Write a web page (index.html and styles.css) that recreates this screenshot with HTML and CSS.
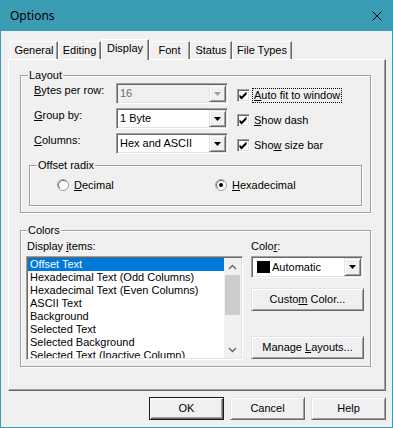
FILE: index.html
```html
<!DOCTYPE html>
<html lang="en">
<head>
	<meta charset="UTF-8">
	<title>Options</title>
	<link rel="stylesheet" href="styles.css">
</head>
<body>
	<div class="window">
		<div class="titlebar">
			<span class="title">Options</span>
			<svg class="close" width="10" height="10" viewBox="0 0 10 10"><path d="M0.5 0.5L9.5 9.5M9.5 0.5L0.5 9.5" stroke="#000" stroke-width="1"/></svg>
		</div>
		<div class="client">
			<div class="tabs">
				<div class="tab t-general">General</div>
				<div class="tab t-editing">Editing</div>
				<div class="tab t-display active">Display</div>
				<div class="tab t-font">Font</div>
				<div class="tab t-status">Status</div>
				<div class="tab t-types">File Types</div>
			</div>
			<div class="panel">
				<fieldset class="group layout">
					<legend>Layout</legend>
					<div class="layout-grid">
						<label class="field-label"><u>B</u>ytes per row:</label>
						<div class="combo disabled">
							<span class="combo-value">16</span>
							<span class="combo-btn"><svg width="7" height="4" viewBox="0 0 7 4"><path d="M0 0h7L3.5 4z"/></svg></span>
						</div>
						<div class="check">
							<span class="checkbox"><svg width="11" height="11" viewBox="0 0 11 11"><path d="M1.5 4.5L3.5 6.5L8.5 1.5V4.5L3.5 9.5L1.5 7.5Z"/></svg></span>
							<span class="check-text focus"><u>A</u>uto fit to window</span>
						</div>

						<label class="field-label"><u>G</u>roup by:</label>
						<div class="combo">
							<span class="combo-value">1 Byte</span>
							<span class="combo-btn"><svg width="7" height="4" viewBox="0 0 7 4"><path d="M0 0h7L3.5 4z"/></svg></span>
						</div>
						<div class="check">
							<span class="checkbox"><svg width="11" height="11" viewBox="0 0 11 11"><path d="M1.5 4.5L3.5 6.5L8.5 1.5V4.5L3.5 9.5L1.5 7.5Z"/></svg></span>
							<span class="check-text"><u>S</u>how dash</span>
						</div>

						<label class="field-label"><u>C</u>olumns:</label>
						<div class="combo">
							<span class="combo-value">Hex and ASCII</span>
							<span class="combo-btn"><svg width="7" height="4" viewBox="0 0 7 4"><path d="M0 0h7L3.5 4z"/></svg></span>
						</div>
						<div class="check">
							<span class="checkbox"><svg width="11" height="11" viewBox="0 0 11 11"><path d="M1.5 4.5L3.5 6.5L8.5 1.5V4.5L3.5 9.5L1.5 7.5Z"/></svg></span>
							<span class="check-text">Sho<u>w</u> size bar</span>
						</div>
					</div>

					<fieldset class="group radix">
						<legend>Offset radix</legend>
						<div class="radios">
							<div class="radio-item r-dec">
								<svg class="radio" width="12" height="12" viewBox="0 0 12 12"><circle cx="6" cy="6" r="5.5" fill="#fff" stroke="#a0a0a0"/><path d="M2.8 9.2A4.5 4.5 0 0 1 9.2 2.8" fill="none" stroke="#696969"/></svg>
								<span><u>D</u>ecimal</span>
							</div>
							<div class="radio-item">
								<svg class="radio" width="12" height="12" viewBox="0 0 12 12"><circle cx="6" cy="6" r="5.5" fill="#fff" stroke="#a0a0a0"/><path d="M2.8 9.2A4.5 4.5 0 0 1 9.2 2.8" fill="none" stroke="#696969"/><circle cx="6" cy="6" r="2" fill="#000"/></svg>
								<span><u>H</u>exadecimal</span>
							</div>
						</div>
					</fieldset>
				</fieldset>

				<fieldset class="group colors">
					<legend>Colors</legend>
					<div class="colors-grid">
						<label class="items-label">Display <u>i</u>tems:</label>
						<label>Colo<u>r</u>:</label>
						<div class="listbox">
							<div class="items">
								<div class="item sel">Offset Text</div>
								<div class="item">Hexadecimal Text (Odd Columns)</div>
								<div class="item">Hexadecimal Text (Even Columns)</div>
								<div class="item">ASCII Text</div>
								<div class="item">Background</div>
								<div class="item">Selected Text</div>
								<div class="item">Selected Background</div>
								<div class="item">Selected Text (Inactive Column)</div>
							</div>
							<div class="scrollbar">
								<div class="sb-btn"><svg width="9" height="6" viewBox="0 0 9 6"><path d="M1 5L4.5 1.5L8 5" fill="none" stroke="#606060" stroke-width="1.3"/></svg></div>
								<div class="sb-thumb"></div>
								<div class="sb-track"></div>
								<div class="sb-btn"><svg width="9" height="6" viewBox="0 0 9 6"><path d="M1 1L4.5 4.5L8 1" fill="none" stroke="#606060" stroke-width="1.3"/></svg></div>
							</div>
						</div>
						<div class="color-side">
							<div class="combo color-combo">
								<span class="combo-value"><i class="swatch"></i>Automatic</span>
								<span class="combo-btn"><svg width="7" height="4" viewBox="0 0 7 4"><path d="M0 0h7L3.5 4z"/></svg></span>
							</div>
							<button class="btn side-btn custom">Custo<u>m</u> Color...</button>
							<button class="btn side-btn manage">Manage <u>L</u>ayouts...</button>
						</div>
					</div>
				</fieldset>
			</div>
			<div class="buttons">
				<button class="btn default">OK</button>
				<button class="btn">Cancel</button>
				<button class="btn">Help</button>
			</div>
		</div>
	</div>
</body>
</html>
```

FILE: styles.css
```css
body{
	margin: 0;
	background: #fff;
	font: 11px/13px "Liberation Sans", Arial, sans-serif;
	color: #000;
}
.window{
	width: 393px;
	height: 428px;
	box-sizing: border-box;
	border: 1px solid #3a9db4;
	border-top: none;
	background: #f0f0f0;
}
.titlebar{
	height: 31px;
	margin: 0 -1px;
	padding: 0 11px 0 10px;
	background: #3a9db4;
	display: flex;
	align-items: center;
	justify-content: space-between;
}
.title{
	font: 12px/16px "Noto Sans", "Open Sans", sans-serif;
}
.client{
	padding: 8px 6px 0 7px;
}

/* tabs */
.tabs{
	display: flex;
	align-items: flex-end;
	height: 20px;
	padding-left: 2px;
}
.tab{
	box-sizing: border-box;
	height: 18px;
	padding-top: 2px;
	border: 1px solid;
	border-color: #fff #696969 transparent #fff;
	border-bottom: none;
	box-shadow: inset -1px 0 #a0a0a0;
	text-align: center;
	white-space: nowrap;
}
.tab.active{
	height: 21px;
	margin-bottom: -1px;
	background: #f0f0f0;
	position: relative;
	z-index: 1;
}
.t-general{ width: 48px; }
.t-editing{ width: 43px; }
.t-display{ width: 48px; }
.t-font{ width: 41px; }
.t-status{ width: 42px; }
.t-types{ width: 60px; }

.panel{
	box-sizing: border-box;
	height: 332px;
	border: 1px solid;
	border-color: #fff #696969 #696969 #fff;
	box-shadow: inset -1px -1px #a0a0a0;
	padding: 9px 0 0 11px;
}

/* group boxes */
.group{
	margin: 0;
	padding: 0;
	min-width: 0;
	box-sizing: border-box;
	border: 1px solid #a0a0a0;
	box-shadow: inset 1px 1px #fff, 1px 1px #fff;
}
.group legend{
	margin-left: 7px;
	padding: 0 1px;
	line-height: 13px;
	background: #f0f0f0;
}
.layout{
	width: 351px;
	padding: 1px 0 6px 0;
}
.layout-grid{
	display: grid;
	grid-template-columns: 82px 112px 1fr;
	grid-auto-rows: 21px;
	row-gap: 4px;
	margin-left: 13px;
}
.field-label{
	padding-top: 1px;
}

/* combo boxes */
.combo{
	box-sizing: border-box;
	height: 21px;
	display: flex;
	padding: 1px;
	background: #fff;
	border: 1px solid;
	border-color: #a0a0a0 #fff #fff #a0a0a0;
	box-shadow: inset 1px 1px #696969, inset -1px -1px #e3e3e3;
}
.combo-value{
	flex: 1;
	padding-left: 2px;
	line-height: 17px;
	white-space: nowrap;
	overflow: hidden;
}
.combo-btn{
	width: 17px;
	box-sizing: border-box;
	border: 1px solid;
	border-color: #e3e3e3 #696969 #696969 #e3e3e3;
	box-shadow: inset 1px 1px #fff, inset -1px -1px #a0a0a0;
	background: #f0f0f0;
	display: flex;
	align-items: center;
	justify-content: center;
}
.combo-btn svg{
	fill: #000;
}
.combo.disabled{
	background: #f0f0f0;
	color: #6d6d6d;
}
.combo.disabled .combo-btn svg{
	fill: #a0a0a0;
}

/* check boxes */
.check{
	display: flex;
	align-items: flex-start;
	gap: 4px;
	padding: 6px 0 0 9px;
	white-space: nowrap;
}
.checkbox{
	width: 13px;
	height: 13px;
	box-sizing: border-box;
	border: 1px solid;
	border-color: #a0a0a0 #fff #fff #a0a0a0;
	box-shadow: inset 1px 1px #696969, inset -1px -1px #e3e3e3;
	background: #fff;
	display: flex;
}
.checkbox svg{
	fill: #000;
}
.focus{
	outline: 1px dotted #000;
	padding: 0 1px;
	margin-left: -1px;
}

/* radio group */
.radix{
	width: 333px;
	height: 47px;
	margin: 5px 0 0 8px;
	padding-top: 7px;
}
.radios{
	display: flex;
	padding-left: 27px;
}
.radio-item{
	display: flex;
	align-items: flex-start;
	gap: 5px;
}
.r-dec{
	width: 158px;
}

/* colors */
.colors{
	width: 351px;
	height: 143px;
	margin-top: 11px;
	padding-top: 3px;
}
.colors legend{
	margin-left: 6px;
}
.colors-grid{
	display: grid;
	grid-template-columns: 217px 113px;
	column-gap: 8px;
	row-gap: 3px;
	margin-left: 5px;
}
.items-label{
	padding-left: 1px;
}
.listbox{
	box-sizing: border-box;
	height: 104px;
	display: flex;
	padding: 1px;
	background: #fff;
	border: 1px solid;
	border-color: #a0a0a0 #fff #fff #a0a0a0;
	box-shadow: inset 1px 1px #696969, inset -1px -1px #e3e3e3;
}
.items{
	flex: 1;
	overflow: hidden;
}
.item{
	padding-left: 2px;
	white-space: nowrap;
}
.item.sel{
	background: #0078d7;
	color: #fff;
}
.scrollbar{
	width: 17px;
	display: flex;
	flex-direction: column;
	background: #f0f0f0;
}
.sb-btn{
	height: 17px;
	display: flex;
	align-items: center;
	justify-content: center;
}
.sb-thumb{
	height: 40px;
	margin: 0 1px;
	background: #cdcdcd;
}
.sb-track{
	flex: 1;
}
.color-side{
	display: flex;
	flex-direction: column;
	align-items: flex-start;
}
.color-combo{
	width: 112px;
	height: 22px;
}
.color-combo .combo-value{
	display: flex;
	align-items: center;
	padding-left: 4px;
	line-height: 18px;
}
.swatch{
	width: 13px;
	height: 12px;
	margin-right: 2px;
	background: #000;
}

/* buttons */
.btn{
	box-sizing: border-box;
	width: 75px;
	height: 23px;
	padding: 0;
	font: inherit;
	color: #000;
	background: #f0f0f0;
	border: 1px solid;
	border-color: #e3e3e3 #696969 #696969 #e3e3e3;
	box-shadow: inset 1px 1px #fff, inset -1px -1px #a0a0a0;
	white-space: nowrap;
}
.btn.default{
	border-color: #1a1a1a;
	box-shadow: inset 1px 1px #fff, inset -1px -1px #696969, inset -2px -2px #a0a0a0;
}
.side-btn{
	width: 113px;
}
.custom{
	margin-top: 10px;
}
.manage{
	margin-top: 25px;
}
.buttons{
	display: flex;
	justify-content: flex-end;
	gap: 6px;
	margin-top: 6px;
}
```
